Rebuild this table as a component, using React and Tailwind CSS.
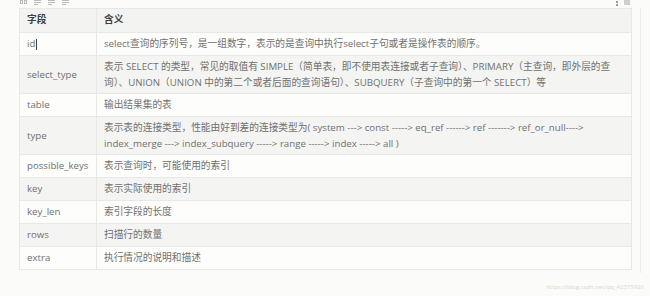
import React from 'react';

const rows = [
  { field: 'id', lines: ['select查询的序列号，是一组数字，表示的是查询中执行select子句或者是操作表的顺序。'], cursor: true },
  {
    field: 'select_type',
    lines: [
      '表示 SELECT 的类型，常见的取值有 SIMPLE（简单表，即不使用表连接或者子查询）、PRIMARY（主查询，即外层的查',
      '询）、UNION（UNION 中的第二个或者后面的查询语句）、SUBQUERY（子查询中的第一个 SELECT）等',
    ],
  },
  { field: 'table', lines: ['输出结果集的表'] },
  {
    field: 'type',
    lines: [
      '表示表的连接类型，性能由好到差的连接类型为( system ---> const -----> eq_ref ------> ref -------> ref_or_null---->',
      'index_merge ---> index_subquery -----> range -----> index -----> all )',
    ],
  },
  { field: 'possible_keys', lines: ['表示查询时，可能使用的索引'] },
  { field: 'key', lines: ['表示实际使用的索引'] },
  { field: 'key_len', lines: ['索引字段的长度'] },
  { field: 'rows', lines: ['扫描行的数量'] },
  { field: 'extra', lines: ['执行情况的说明和描述'] },
];

export default function App() {
  return (
    <div
      className="relative w-[650px] h-[296px] overflow-hidden bg-[#fbfcfa] text-[9.7px] text-[#707070]"
      style={{ fontFamily: '"Open Sans", "Noto Sans CJK SC", sans-serif' }}
    >
      {/* toolbar remnants, cut off at the top */}
      <div className="flex items-start justify-between h-[8px] pl-[20px] pr-[20px]">
        <div className="flex items-start gap-[7px]">
          <div className="flex gap-[1px]">
            <span className="w-[3px] h-[4px] border border-[#bbb]" />
            <span className="w-[3px] h-[4px] border border-[#bbb]" />
          </div>
          {[0, 1, 2].map((k) => (
            <div key={k} className="flex flex-col gap-[1px] w-[7px]">
              <span className="h-[1px] bg-[#bbb]" />
              <span className="h-[1px] bg-[#bbb]" />
              <span className="h-[1px] w-[4px] bg-[#bbb]" />
            </div>
          ))}
        </div>
        <div className="flex items-start gap-[6px]">
          <div className="flex flex-col gap-[1px] pt-[1px]">
            <span className="w-[2px] h-[2px] bg-[#999]" />
            <span className="w-[2px] h-[2px] bg-[#999]" />
          </div>
          <span className="w-[6px] h-[5px] bg-[#cfcfcf]" />
        </div>
      </div>

      <div className="flex pl-[19px]">
        <div className="border-r border-[#eeefed] pr-[8px] pb-[3px]">
          <table className="w-[613px] border-collapse border border-[#e8e9e7] table-fixed">
            <colgroup>
              <col className="w-[77px]" />
              <col />
            </colgroup>
            <thead>
              <tr className="h-[24px] bg-[#f3f4f2]">
                <th className="border border-[#e8e9e7] px-[7px] text-left font-bold text-[#404040]">字段</th>
                <th className="border border-[#e8e9e7] px-[7px] text-left font-bold text-[#404040]">含义</th>
              </tr>
            </thead>
            <tbody>
              {rows.map((r, i) => (
                <tr
                  key={r.field}
                  className={`${r.lines.length > 1 ? 'h-[38px]' : 'h-[23px]'} ${i % 2 === 1 ? 'bg-[#f4f5f3]' : 'bg-[#fdfefc]'}`}
                >
                  <td className="border border-[#e8e9e7] px-[7px] leading-[16px] whitespace-nowrap">
                    {r.field}
                    {r.cursor && <span className="inline-block align-middle ml-[1px] w-[1px] h-[11px] bg-[#444]" />}
                  </td>
                  <td className="border border-[#e8e9e7] px-[7px] leading-[16px] whitespace-nowrap">
                    {r.lines.map((l, j) => (
                      <div key={j}>{l}</div>
                    ))}
                  </td>
                </tr>
              ))}
            </tbody>
          </table>
        </div>
      </div>

      {/* watermark */}
      <div className="absolute right-[6px] bottom-[4px] text-[6px] text-[#d6d6d6]">
        https://blog.csdn.net/qq_42375926
      </div>
    </div>
  );
}
